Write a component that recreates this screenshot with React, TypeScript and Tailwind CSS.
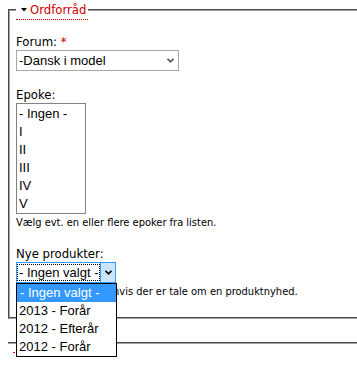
const labelFont = "font-['DejaVu_Sans_Condensed','DejaVu_Sans',sans-serif]";
const selectFont = "font-['Liberation_Sans',Arial,sans-serif]";

const Chevron = ({ className }: { className?: string }) => (
  <svg width="7" height="5" viewBox="0 0 7 5" className={className}>
    <path d="M0.5 0.8 L3.5 3.8 L6.5 0.8" fill="none" stroke="currentColor" strokeWidth="1.6" />
  </svg>
);

const epoker = ["- Ingen -", "I", "II", "III", "IV", "V"];
const produkter = ["- Ingen valgt -", "2013 - Forår", "2012 - Efterår", "2012 - Forår"];

export default function App() {
  return (
    <div className="relative h-[366px] w-full overflow-hidden bg-white text-black">
      {/* Ordforråd */}
      <fieldset className="ml-2 w-[400px] border-2 border-[#a0a0a0] px-[6px] pb-[19px] [border-style:groove]">
        <legend className={`${labelFont} flex h-[19px] items-start text-[13px] text-[#cc0000]`}>
          <span className="flex h-[20px] items-center gap-[3px] border-b border-dotted border-[#cc0000] pl-[5px] pr-[2px] pt-[1px] leading-[18px]">
            <svg width="6" height="4" viewBox="0 0 6 4" className="text-black">
              <path d="M0 0 H6 L3 3.5 Z" fill="currentColor" />
            </svg>
            Ordforråd
          </span>
        </legend>

        <label className={`${labelFont} mt-[15px] block text-[13px] leading-4`}>
          Forum: <span className="text-[#cc0000]">*</span>
        </label>
        <div
          className={`${selectFont} flex h-[21px] w-[163px] items-center justify-between border border-[#a9a9a9] pl-[2px] pr-[4px] text-[13px]`}
        >
          <span>-Dansk i model</span>
          <Chevron className="text-[#555]" />
        </div>

        <label className={`${labelFont} mt-4 block text-[13px] leading-4`}>Epoke:</label>
        <div className={`${selectFont} h-[111px] w-[70px] border border-[#828282] pl-[2px] pt-[1px] text-[13px] leading-[18px]`}>
          {epoker.map((e) => (
            <div key={e}>{e}</div>
          ))}
        </div>
        <p className={`${labelFont} mt-[2px] text-[11px] leading-[13px]`}>
          Vælg evt. en eller flere epoker fra listen.
        </p>

        <label className={`${labelFont} mt-[17px] block text-[13px] leading-4`}>Nye produkter:</label>
        <div className="relative w-[100px]">
          <div className={`${selectFont} flex h-[21px] items-stretch border border-[#3399ff] text-[13px]`}>
            <div className="my-[1px] flex min-w-0 flex-1 items-center overflow-hidden whitespace-nowrap border border-dotted border-black pl-[1px]">
              - Ingen valgt -
            </div>
            <div className="flex w-[15px] shrink-0 items-center justify-center border-l border-[#3399ff] bg-[#cce4f7]">
              <Chevron className="text-black" />
            </div>
          </div>

          {/* open dropdown list */}
          <ul
            className={`${selectFont} absolute left-0 top-full z-10 w-[101px] border border-black bg-white text-[13px] leading-[18px]`}
          >
            {produkter.map((p, i) => (
              <li key={p} className={i === 0 ? "bg-[#3399ff] pl-[3px] text-white" : "pl-[2px]"}>
                {p}
              </li>
            ))}
          </ul>
        </div>
        <p className={`${labelFont} mt-[2px] text-[11px] leading-[13px]`}>
          Angiv evt. periode, hvis der er tale om en produktnyhed.
        </p>
      </fieldset>

      {/* next section, hidden behind the open list */}
      <div className="ml-2 mt-[23px] h-[40px] w-[400px] border-t-2 border-[#a0a0a0] [border-style:groove]">
        <div className="ml-[5px] mt-[7px] h-[2px] w-[90px] border-b border-dotted border-[#cc0000]" />
      </div>
    </div>
  );
}
